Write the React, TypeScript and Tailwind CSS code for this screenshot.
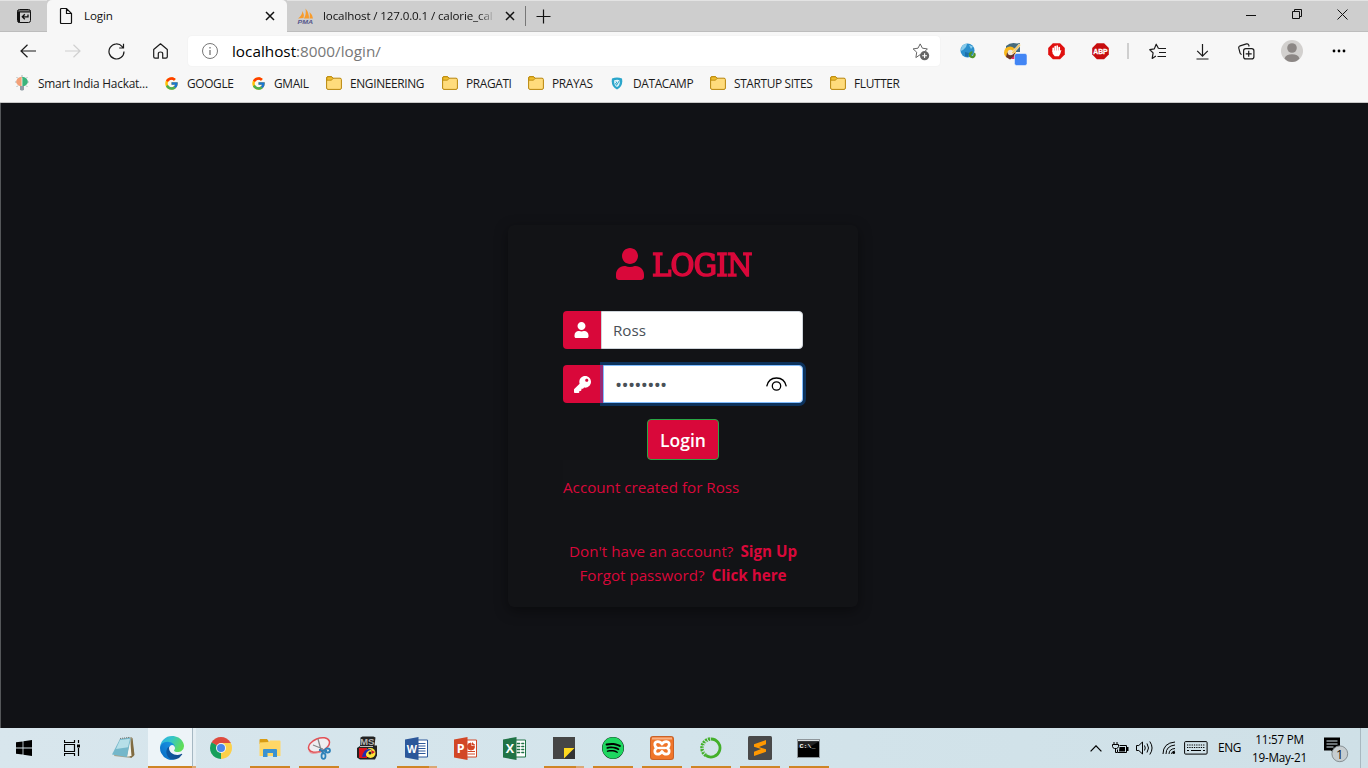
import React from "react";
import type { ReactNode } from "react";
import { FaUser, FaKey, FaSpotify } from "react-icons/fa";
import { FcGoogle } from "react-icons/fc";

const line = { fill: "none", stroke: "currentColor" } as const;

/* ---------- browser icons ---------- */

function TabActionsIcon() {
  return (
    <svg width="16" height="16" viewBox="0 0 16 16">
      <rect x="1.5" y="1.5" width="13" height="13" rx="2" {...line} />
      <path d="M1.5 4h13M1.5 3h13" {...line} />
      <path d="M1.5 4h2.5v10.5h-2z" fill="#111" />
      <path d="M12 6.5v2.300H6.500M8.800 6.200L6.300 8.800l2.500 2.400" {...line} strokeWidth="1.300" />
    </svg>
  );
}

function PageIcon() {
  return (
    <svg width="14" height="18" viewBox="0 0 14 18">
      <path d="M1.500 2.500q0-1 1-1h5l5 5v9q0 1-1 1h-9q-1 0-1-1zM7.500 1.500v5h5" {...line} strokeWidth="1.200" />
    </svg>
  );
}

function CloseIcon() {
  return (
    <svg width="10" height="10" viewBox="0 0 10 10">
      <path d="M1 1l8 8M9 1L1 9" {...line} strokeWidth="1.500" />
    </svg>
  );
}

function PmaIcon() {
  return (
    <svg width="17" height="16" viewBox="0 0 17 16">
      <path d="M1 10.500Q5 8 5.500 3q2 3.500 1 7zM7 10.500Q9.500 6 8.500 .5q3.500 4 3.500 10zM12.500 10.500q.8-3 0-6.500 3 2.500 3.500 6.500z" fill="#f89c2c" />
      <text x="0.500" y="15.500" fontSize="6" fontWeight="bold" fontStyle="italic" fontFamily="Liberation Sans, sans-serif" textLength="15.500" lengthAdjust="spacingAndGlyphs" fill="#55578c">PMA</text>
    </svg>
  );
}

function FolderIcon() {
  return (
    <svg width="16" height="14" viewBox="0 0 16 14">
      <path d="M.6 2q0-1.400 1.400-1.400h3.600l1.400 1.600h7q1.400 0 1.400 1.400V12q0 1.400-1.400 1.400H2Q.6 13.400.6 12z" fill="#ffdc7c" stroke="#b8860b" />
      <path d="M.8 4.200h4.700L7 2.400 5.600.8H2q-1.200 0-1.200 1.200z" fill="#f0be2e" stroke="#b8860b" strokeWidth=".8" />
    </svg>
  );
}

function HackathonIcon() {
  return (
    <svg width="16" height="16" viewBox="0 0 16 16">
      <path d="M8 0v2M2.500 2L4 3.500M13.500 2L12 3.500M1 7h2M13 7h2M2.500 12L4 10.500M13.500 12L12 10.500" stroke="#aab7b5" />
      <path d="M8 2.300A4.500 4.500 0 0 0 5.500 11H8z" fill="#f3a078" />
      <path d="M8 2.300A4.500 4.500 0 0 1 10.500 11H8z" fill="#3bb47c" />
      <path d="M6 11h4v3.500l-1 1H7l-1-1z" fill="#929da5" />
      <path d="M8 3v8" stroke="#fff" strokeWidth=".7" />
    </svg>
  );
}

function DatacampIcon() {
  return (
    <svg width="12" height="13" viewBox="0 0 12 13">
      <path d="M1 1.500Q6-.5 11 1.500q1.500 8-5 11Q-.5 9.500 1 1.500z" fill="#2ba6cb" />
      <path d="M3.200 3.200q3-1 5.600 0Q9.500 8 6 10 2.500 8 3.200 3.200z" fill="#e3f5fa" />
      <path d="M4.500 6l1 2.300L8.500 3.500M5 4.500l1 2" stroke="#2ba6cb" fill="none" />
    </svg>
  );
}

function AddFavoriteIcon() {
  return (
    <svg width="19" height="18" viewBox="0 0 19 18" className="text-[#666]">
      <path d="M9.500 12.300l-1.300-.7-4.300 3 .8-5.400L1.100 5.900 6 5.200 8.200.9l2.200 4.300 5 .7-2.300 2.300" {...line} />
      <circle cx="12.600" cy="12.700" r="4.600" fill="#666" />
      <path d="M10.200 12.700H15M12.600 10.300v4.800" stroke="#fff" strokeWidth="1.100" />
    </svg>
  );
}

function FavoritesIcon() {
  return (
    <svg width="18" height="17" viewBox="0 0 18 17">
      <path d="M9.500 5.500L7.200 1.200 5.300 5.900l-4.500.8 3.300 3.200-.9 5.500 3.700-2.300M9.500 5.500h7.500M10 9.500h7M8.500 13.500H17" {...line} strokeWidth="1.200" strokeLinejoin="round" />
    </svg>
  );
}

function CollectionsIcon() {
  return (
    <svg width="17" height="17" viewBox="0 0 17 17">
      <rect x="5.600" y="5.600" width="10.300" height="10.300" rx="2.200" {...line} strokeWidth="1.200" />
      <path d="M10.700 7.800v6M7.700 10.800h6M3.700 11.500q-1.400-.4-1.700-1.700L.8 5.200q-.4-1.800 1.300-2.400L8.500.9q1.800-.4 2.300 1.200l.3 1.400" {...line} strokeWidth="1.200" />
    </svg>
  );
}

function WorldIcon() {
  return (
    <svg width="17" height="16" viewBox="0 0 17 16">
      <circle cx="7.500" cy="7.500" r="7" fill="#2b8fcc" />
      <path d="M1.500 4Q4 0 7 1L6 4 3 7 .8 8zM9 2l4 1.500-2 2.500z" fill="#88cbea" />
      <path d="M5 9l4 1-1 4-3-1z" fill="#1d6fab" />
      <path d="M12.500 9.500a2.300 2.300 0 1 0 1.500.8" fill="none" stroke="#4f9529" strokeWidth="2.400" />
    </svg>
  );
}

function CaptureIcon() {
  return (
    <svg width="24" height="24" viewBox="0 0 24 24">
      <path d="M3 4Q8-.5 14 1.500l3-.5v9H3z" fill="#466b7c" />
      <circle cx="7" cy="10.500" r="6" fill="#f9b71b" />
      <path d="M3 15l1-4 4-3 4 3-1 4-4 2.500z" fill="#6a3428" />
      <circle cx="7.500" cy="10.500" r="2.800" fill="#efe6db" />
      <path d="M8 11L16 2l2 1-8 9z" fill="#f7cb69" stroke="#fff" strokeWidth=".5" />
      <path d="M8 17l4-4h2v4z" fill="#ee2467" />
      <rect x="11.500" y="11.500" width="12.500" height="12" rx="2" fill="#4285f4" stroke="#fff" strokeWidth=".5" />
    </svg>
  );
}

const OCT = "M4.900.2h7.200l4.700 4.700v6.600l-4.700 4.700H4.900L.2 11.500V4.900z";

function AdblockIcon() {
  return (
    <svg width="17" height="17" viewBox="0 0 17 17">
      <path d={OCT} fill="#e0100f" />
      <path d="M5.200 8.200V5.300M7.200 8V3.700M9.200 8V3.200M11.200 9V4.600" stroke="#fff" strokeWidth="1.700" strokeLinecap="round" />
      <path d="M4.400 7.500h7.500l1.500-.5-1 3.500-1.500 2.800H6.700L4.600 10.500z" fill="#fff" />
    </svg>
  );
}

function AbpIcon() {
  return (
    <svg width="17" height="17" viewBox="0 0 17 17">
      <path d={OCT} fill="#c70d0e" />
      <text x="1.300" y="11" fontSize="7.500" fontWeight="bold" fontFamily="Liberation Sans, sans-serif" textLength="14.300" lengthAdjust="spacingAndGlyphs" fill="#fff" stroke="#fff" strokeWidth=".3">ABP</text>
    </svg>
  );
}

function ProfileIcon() {
  return (
    <svg width="22" height="22" viewBox="0 0 22 22">
      <circle cx="11" cy="11" r="11" fill="#d2d0ce" />
      <circle cx="11" cy="8" r="4.800" fill="#8c8785" />
      <path d="M3.500 18.500Q5 14.300 11 14.300t7.500 4.200Q15.500 22 11 22t-7.500-3.500z" fill="#8c8785" />
    </svg>
  );
}

/* ---------- browser chrome ---------- */

function TabStrip() {
  return (
    <div className="flex h-8 shrink-0 items-stretch border-b border-[#bdbdbd] bg-[#cecece] text-[#111]">
      <div className="flex w-[47px] items-center justify-center rounded-br border-t border-[#e3e3e3]">
        <TabActionsIcon />
      </div>
      <div className="-mb-px flex w-60 items-center rounded-t-[5px] bg-[#f7f7f7] pl-3">
        <PageIcon />
        <span className="ml-[11px] flex-1 text-[11.600px] tracking-[-0.100px]">Login</span>
        <span className="mr-[12px]"><CloseIcon /></span>
      </div>
      <div className="flex w-[238px] items-center border-t border-[#e3e3e3] pl-2.5">
        <PmaIcon />
        <span className="ml-[9px] w-[172px] bg-gradient-to-r from-[#111] from-90% to-[#cecece] bg-clip-text text-[11.600px] tracking-[-0.130px] whitespace-nowrap text-transparent">localhost / 127.0.0.1 / calorie_cal</span>
        <span className="ml-[10px]"><CloseIcon /></span>
      </div>
      <div className="flex flex-1 items-center border-t border-[#e3e3e3]">
        <span className="h-5 w-px bg-[#777]" />
        <svg width="15" height="15" viewBox="0 0 15 15" className="ml-[10px]"><path d="M7.500.5v14M.5 7.500h14" {...line} strokeWidth="1.200" /></svg>
      </div>
      <div className="flex w-[138px] items-center border-t border-[#e3e3e3] pb-[3px]">
        <span className="flex w-[46px] pl-[16px]"><svg width="10" height="10"><path d="M0 5.500h10" {...line} /></svg></span>
        <span className="flex w-[46px] pl-4"><svg width="11" height="11"><path d="M.5 2.500h7v7h-7zM2.500 2.500v-2h7v7h-2" {...line} /></svg></span>
        <span className="flex w-[46px] pl-[15px]"><svg width="11" height="11"><path d="M.5.5l10 10M10.500.5l-10 10" {...line} /></svg></span>
      </div>
    </div>
  );
}

function Tool({ children, className = "w-[46px]" }: { children: ReactNode; className?: string }) {
  return <div className={"flex shrink-0 items-center justify-center " + className}>{children}</div>;
}

function Toolbar() {
  return (
    <div className="flex h-[38px] shrink-0 items-center bg-[#f7f7f7] text-[#1b1b1b]">
      <Tool className="ml-1.5 w-11"><svg width="17" height="14" viewBox="0 0 17 14"><path d="M16 7H1M7.500.7L1 7l6.500 6.300" {...line} strokeWidth="1.200" /></svg></Tool>
      <Tool className="w-11 text-[#d0d0d0]"><svg width="17" height="14" viewBox="0 0 17 14"><path d="M1 7h15M9.500.7L16 7l-6.500 6.300" {...line} strokeWidth="1.200" /></svg></Tool>
      <Tool className="w-11"><svg width="17" height="17" viewBox="0 0 17 17"><path d="M16 8.500A7.500 7.500 0 1 1 14.200 3.600L15.500 5M15.500.8V5h-4.300" {...line} strokeWidth="1.200" /></svg></Tool>
      <Tool className="w-11"><svg width="15" height="16" viewBox="0 0 15 16"><path d="M.7 6.500L7.500.8l6.800 5.700v7.300q0 1.400-1.400 1.400H9.700v-4.500q0-1.700-2.200-1.700t-2.200 1.700v4.500H2.100q-1.400 0-1.400-1.400z" {...line} strokeWidth="1.200" strokeLinejoin="round" /></svg></Tool>
      <div className="ml-1.5 flex h-[30px] w-[752px] items-center rounded bg-white pl-[14px] shadow-[0_0_2px_rgba(0,0,0,0.06)]">
        <svg width="16" height="16" viewBox="0 0 16 16" className="text-[#777]"><circle cx="8" cy="8" r="7.500" {...line} /><path d="M8 7v5M8 4v1.500" {...line} strokeWidth="1.300" /></svg>
        <span className="ml-[14px] flex-1 text-[15.300px] text-[#777]"><span className="text-black">localhost</span>:8000/login/</span>
        <span className="mr-[9px] pt-0.5"><AddFavoriteIcon /></span>
      </div>
      <Tool className="ml-[6px] w-11"><WorldIcon /></Tool>
      <Tool className="w-11 pt-[5px] pl-[5px]"><CaptureIcon /></Tool>
      <Tool className="w-11"><AdblockIcon /></Tool>
      <Tool className="w-11"><AbpIcon /></Tool>
      <Tool className="w-3"><span className="h-4 w-0.5 bg-[#cfcfcf]" /></Tool>
      <Tool className="ml-0.5 w-11"><FavoritesIcon /></Tool>
      <Tool className="w-11"><svg width="13" height="17" viewBox="0 0 13 17"><path d="M6.500 1v12M1.200 7.800l5.300 5.300 5.300-5.300M.5 16h12" {...line} strokeWidth="1.200" /></svg></Tool>
      <Tool className="w-11"><CollectionsIcon /></Tool>
      <Tool className="w-12"><ProfileIcon /></Tool>
      <Tool className="w-[46px]"><svg width="14" height="4"><circle cx="2" cy="2" r="1.400" /><circle cx="7" cy="2" r="1.400" /><circle cx="12" cy="2" r="1.400" /></svg></Tool>
    </div>
  );
}

function Bookmark({ icon, className, children }: { icon: ReactNode; className: string; children: ReactNode }) {
  return (
    <div className={"flex shrink-0 items-center gap-2 whitespace-nowrap " + className}>
      {icon}
      <span className="pt-px">{children}</span>
    </div>
  );
}

function BookmarksBar() {
  return (
    <div className="flex h-[33px] shrink-0 items-center border-b border-[#c8c8c8] bg-[#f7f7f7] pb-[5px] pl-[14px] text-[11.900px] tracking-[-0.350px] text-[#1b1b1b]">
      <Bookmark className="w-[150px]" icon={<HackathonIcon />}><span className="tracking-[-0.220px]">Smart India Hackat...</span></Bookmark>
      <Bookmark className="w-[87px]" icon={<FcGoogle size={15} />}>GOOGLE</Bookmark>
      <Bookmark className="w-[75px]" icon={<FcGoogle size={15} />}>GMAIL</Bookmark>
      <Bookmark className="w-[116px]" icon={<FolderIcon />}>ENGINEERING</Bookmark>
      <Bookmark className="w-[86px]" icon={<FolderIcon />}>PRAGATI</Bookmark>
      <Bookmark className="w-[81px]" icon={<FolderIcon />}>PRAYAS</Bookmark>
      <Bookmark className="w-[101px] pl-0.5" icon={<DatacampIcon />}><span className="pl-0.5">DATACAMP</span></Bookmark>
      <Bookmark className="w-[120px]" icon={<FolderIcon />}>STARTUP SITES</Bookmark>
      <Bookmark className="w-[80px]" icon={<FolderIcon />}>FLUTTER</Bookmark>
    </div>
  );
}

/* ---------- login page ---------- */

function LoginCard() {
  return (
    <div className="flex h-[382px] w-[350px] flex-col items-center rounded-md bg-[#121316] text-[15.200px] leading-6 text-[#d9083a] shadow-[0_4px_14px_rgba(0,0,0,0.4)]">
      <h1 className="mt-5 ml-px flex h-[38px] w-[136px] items-center gap-2">
        <FaUser className="h-8 w-7 shrink-0" />
        <span className="origin-left scale-x-[0.94] pt-0.5 font-['DejaVu_Serif'] text-[31px] leading-none tracking-[-0.800px] [-webkit-text-stroke:1.600px_#d9083a]">LOGIN</span>
      </h1>
      <div className="mt-7 flex h-[38px] w-60">
        <div className="flex w-[38px] items-center justify-center rounded-l bg-[#d9083a] pr-px text-white"><FaUser className="h-4 w-[15px]" /></div>
        <div className="flex flex-1 items-center rounded-r border border-[#ced4da] bg-white pl-[11px] text-[#495057]">Ross</div>
      </div>
      <div className="mt-4 flex h-[38px] w-60">
        <div className="flex w-10 items-center rounded-l bg-[#d9083a] pl-[11px] text-white"><FaKey size={17} /></div>
        <div className="flex flex-1 items-center rounded-r border border-[#80bdff] bg-white pl-3 text-[#495057] shadow-[0_0_0_3px_rgba(0,123,255,0.3)]">
          <span className="-ml-px flex-1 pt-px text-[19px] tracking-[-0.700px]">••••••••</span>
          <svg width="21" height="14" viewBox="0 0 21 14" className="mr-[15px] text-black"><path d="M.7 9.300Q2.500 1 10.500 1t9.800 8.300" {...line} strokeWidth="1.300" /><circle cx="10.500" cy="9" r="4.200" {...line} strokeWidth="1.300" /></svg>
        </div>
      </div>
      <button className="mt-4 h-[41px] w-[72px] rounded border border-[#28a745] bg-[#d9083a] text-[17.500px] font-semibold text-white">Login</button>
      <div className="flex h-10 w-[295px] items-center self-end bg-[#131417] pt-[13px]">Account created for Ross</div>
      <div className="mt-[39px] flex gap-[7px]"><span>Don't have an account?</span><span className="font-bold">Sign Up</span></div>
      <div className="flex gap-[7px]"><span>Forgot password?</span><span className="font-bold">Click here</span></div>
    </div>
  );
}

/* ---------- taskbar icons ---------- */

function NotepadIcon() {
  return (
    <svg width="24" height="24" viewBox="0 0 24 24">
      <path d="M9 3l12-2 2 19-3 2-17-2z" fill="#a7a38e" />
      <path d="M20.500 2.500L21.500 2l2 17-3.500 3-1.500-2z" fill="#806c42" />
      <path d="M19 3l1.500 17-4.500.5z" fill="#f3f4ef" />
      <path d="M9 3l10-1.500.5 2L16 21 1 18.500z" fill="#74b7ca" />
      <path d="M9 4l10-1.200-2 8.500L5 13z" fill="#b6dfe8" />
      <path d="M9 2.500l10-1.200" stroke="#777" strokeDasharray="1 1" />
    </svg>
  );
}

function EdgeIcon() {
  return (
    <svg width="24" height="24" viewBox="0 0 256 256">
      <defs>
        <linearGradient id="edgeA" x1="0" x2="1"><stop stopColor="#0c59a4" /><stop offset="1" stopColor="#114a8b" /></linearGradient>
        <linearGradient id="edgeB" x1="1" y1="0" x2="0" y2="1"><stop stopColor="#1b9de2" /><stop offset=".5" stopColor="#1383d7" /><stop offset="1" stopColor="#0667bd" /></linearGradient>
        <linearGradient id="edgeC" x1="0" y1="0" x2="1" y2=".4"><stop stopColor="#2aacec" /><stop offset=".5" stopColor="#36c6c5" /><stop offset="1" stopColor="#5fdd59" /></linearGradient>
      </defs>
      <path fill="url(#edgeA)" d="M231 190.500c-3.400 1.800-6.900 3.400-10.500 4.700a101.700 101.700 0 0 1-35.900 6.400c-47.300 0-88.500-32.500-88.500-74.300a31.500 31.500 0 0 1 16.400-27.300c-42.800 1.800-53.800 46.400-53.800 72.500 0 73.900 68.100 81.400 82.800 81.400 7.900 0 19.800-2.300 27-4.600l1.300-.4a128.300 128.300 0 0 0 66.600-52.800 4 4 0 0 0-5.400-5.600z" />
      <path fill="url(#edgeB)" d="M105.700 241.400a79.200 79.200 0 0 1-22.700-21.300 80.700 80.700 0 0 1 29.500-120c3.200-1.500 8.500-4.100 15.600-4a32.400 32.400 0 0 1 25.700 13 31.900 31.900 0 0 1 6.300 18.700c0-.2 24.500-79.600-80-79.600-43.900 0-80 41.700-80 78.200a130.200 130.200 0 0 0 12.100 56 128 128 0 0 0 156.400 67 75.500 75.500 0 0 1-62.800-8z" />
      <path fill="url(#edgeC)" d="M152.300 148.900c-.8 1-3.300 2.500-3.300 5.700 0 2.600 1.700 5.100 4.700 7.200 14.400 10 41.500 8.700 41.600 8.700 10.700 0 21.100-2.900 30.300-8.300a61.400 61.400 0 0 0 30.400-52.900c.3-22.400-8-37.300-11.300-43.900C223.500 23.900 177.700 0 128 0A128 128 0 0 0 0 126.200c.5-36.500 36.800-66 80-66 3.500 0 23.500.3 42 10.100 16.300 8.600 24.900 18.900 30.800 29.200 6.200 10.700 7.300 24.100 7.300 29.500s-2.700 13.300-7.800 19.900z" />
    </svg>
  );
}

function ChromeIcon() {
  return (
    <svg width="22" height="22" viewBox="0 0 22 22">
      <path d="M11 11L1.500 5.500a11 11 0 0 1 19 0z" fill="#de4a3d" />
      <path d="M11 11l9.500-5.500A11 11 0 0 1 11 22z" fill="#fcd04a" />
      <path d="M11 11v11A11 11 0 0 1 1.500 5.500z" fill="#169f5b" />
      <path d="M11 6h9.800q1.500 4 0 9L11 22l5-8z" fill="#fcd04a" />
      <path d="M11 6h9.800L20 5H11z" fill="#de4a3d" />
      <path d="M6.500 13.500l-5-8L6 8z" fill="#169f5b" />
      <circle cx="11" cy="11" r="5" fill="#f5f5f5" />
      <circle cx="11" cy="11" r="4" fill="#4a86ea" />
    </svg>
  );
}

function ExplorerIcon() {
  return (
    <svg width="22" height="18" viewBox="0 0 22 18">
      <path d="M.5 1Q.5 0 1.500 0H8l1.500 2v3h-9z" fill="#d99c12" />
      <path d="M.5 3.500L10 3l1-1.500h9.500q1 0 1 1V17h-21z" fill="#ffd766" />
      <path d="M4 18v-7q0-1 1-1h12q1 0 1 1v7h-4v-4H8.500v4z" fill="#3b92d1" />
    </svg>
  );
}

function SnipIcon() {
  return (
    <svg width="24" height="24" viewBox="0 0 24 24">
      <ellipse cx="12" cy="9" rx="11" ry="6.500" transform="rotate(-22 12 9)" fill="#eeeef0" stroke="#e25055" strokeWidth="1.500" />
      <path d="M2 15q1 4 12 1" stroke="#e8888c" fill="none" />
      <path d="M11 3l3 11M6 9l10 4" stroke="#888" strokeWidth="1.300" />
      <path d="M13 13l4 5M12 14l8 1" stroke="#327cae" strokeWidth="2" />
      <ellipse cx="20.500" cy="14.500" rx="2.500" ry="2" fill="none" stroke="#2c82ba" strokeWidth="1.800" />
      <ellipse cx="16.500" cy="20" rx="2" ry="2.800" fill="none" stroke="#2c82ba" strokeWidth="1.800" />
    </svg>
  );
}

function MsIcon() {
  return (
    <svg width="21" height="24" viewBox="0 0 21 24">
      <path d="M3.500 1.500l2-1h11l2 1-1 8H20v10l-2 4H3l-3-2V12l3-2z" fill="#222" />
      <text x="3" y="8.800" fontSize="9.500" fontWeight="bold" fontFamily="Liberation Sans, sans-serif" textLength="14.500" lengthAdjust="spacingAndGlyphs" fill="#b4b4b4">MS</text>
      <path d="M2 12h8v10H2z" fill="#dc111b" />
      <circle cx="13.500" cy="17" r="5" fill="#ffe538" />
      <path d="M5 21q2-10 10-7.500-7 1.500-6 7z" fill="#202baf" />
      <path d="M14 14l4 2-3 2z" fill="#d6172b" />
      <circle cx="13" cy="17" r="1.500" fill="#222" />
      <path d="M3 10.500h13" stroke="#bbb" />
    </svg>
  );
}

function OfficeIcon({ letter, color }: { letter: string; color: string }) {
  return (
    <svg width="23" height="23" viewBox="0 0 23 23">
      <path d="M12 3h10.500v17H12z" fill="#fff" stroke={color} />
      {letter === "W" && <path d="M13 6.500h7.500M13 9h7.500M13 11.500h7.500M13 14h7.500M13 16.500h7.500" stroke={color} />}
      {letter === "P" && <path d="M17 6a3.500 3.500 0 1 0 3.500 3.500H17zM18.500 5.500V8H21M13.500 14.500H21M13.500 17H21" fill={color} stroke={color} />}
      {letter === "X" && <path d="M14 6h3v1h-3zm4.500 0H21v1h-2.500zM14 9h3v1h-3zm4.500 0H21v1h-2.500zM14 12h3v1h-3zm4.500 0H21v1h-2.500zM14 15h3v1h-3zm4.500 0H21v1h-2.500z" fill={color} stroke={color} strokeWidth=".5" />}
      <path d="M0 2.500L13.500 0v23L0 20.500z" fill={color} />
      <text x="6.800" y="16" textAnchor="middle" fontSize={letter === "W" ? "10.500" : "12.500"} fontWeight="bold" fontFamily="Open Sans, sans-serif" fill="#fff">{letter}</text>
    </svg>
  );
}

function StickyIcon() {
  return (
    <svg width="22" height="22" viewBox="0 0 22 22">
      <path d="M0 0h22v22H0z" fill="#454545" />
      <path d="M11 11h10.500L11 21.500z" fill="#ffd91f" />
      <path d="M22 11v11H11z" fill="#333" />
    </svg>
  );
}

function XamppIcon() {
  return (
    <svg width="24" height="24" viewBox="0 0 24 24">
      <rect width="24" height="24" rx="3" fill="#c96127" />
      <rect x="1" y="1" width="22" height="22" rx="2.500" fill="#f0762a" />
      <path d="M2 1.500h20v2H2z" fill="#f7b184" />
      <path d="M12 8.200Q10.500 5.500 7.500 5.700 4.500 6 4.800 9q.2 2 2.200 3-2.200 1-2.200 3.200 0 2.800 2.900 3 2.800 0 4.300-2.700 1.500 2.700 4.300 2.700 2.900-.2 2.900-3 0-2.200-2.200-3.200 2-1 2.200-3 .3-3-2.700-3.300-3-.2-4.500 2.500z" fill="none" stroke="#fff" strokeWidth="2.700" strokeLinejoin="round" />
      <path d="M9 12h6" stroke="#fff" strokeWidth="2.500" strokeLinecap="round" />
    </svg>
  );
}

function AnacondaIcon() {
  return (
    <svg width="22" height="22" viewBox="0 0 22 22">
      <path d="M11 2a9 9 0 1 1-5 16.500" fill="none" stroke="#43b02a" strokeWidth="2.800" />
      <path d="M6 18.500A9 9 0 0 1 11 2" fill="none" stroke="#43b02a" strokeWidth="3.500" strokeDasharray="2 .8" />
      <path d="M5 16.500A8 8 0 0 1 9 3.500" fill="none" stroke="#d5e4eb" strokeWidth=".9" strokeDasharray="1.500 1" />
    </svg>
  );
}

function SublimeIcon() {
  return (
    <svg width="24" height="24" viewBox="0 0 24 24">
      <rect width="24" height="24" rx="1.500" fill="#494949" />
      <path d="M6 8.300L18 4v4.300L11 11l7 2.300v2.500L6 20v-4.300L13 13 6 10.800z" fill="#ff9800" />
    </svg>
  );
}

function CmdIcon() {
  return (
    <svg width="23" height="19" viewBox="0 0 23 19">
      <path d="M0 0h23v19H0z" fill="#8e969b" />
      <path d="M1 2.500h21V18H1z" fill="#000" />
      <path d="M1 1h21v1H1z" fill="#dce0e2" />
      <path d="M1 2.500h21L11 9H1z" fill="#222" />
      <text x="2.500" y="8.800" fontSize="6" fontWeight="bold" fontFamily="Liberation Mono, monospace" fill="#fff" textLength="16" lengthAdjust="spacingAndGlyphs">C:\_</text>
    </svg>
  );
}

type TaskApp = { icon: ReactNode; run?: "one" | "many" | "active" };

const APPS: TaskApp[] = [
  { icon: <NotepadIcon /> },
  { icon: <EdgeIcon />, run: "active" },
  { icon: <ChromeIcon /> },
  { icon: <ExplorerIcon />, run: "one" },
  { icon: <SnipIcon />, run: "one" },
  { icon: <MsIcon /> },
  { icon: <OfficeIcon letter="W" color="#2b579a" />, run: "many" },
  { icon: <OfficeIcon letter="P" color="#d24726" /> },
  { icon: <OfficeIcon letter="X" color="#217346" /> },
  { icon: <StickyIcon />, run: "many" },
  { icon: <span className="flex rounded-full bg-black"><FaSpotify size={22} color="#1ed760" /></span>, run: "one" },
  { icon: <XamppIcon />, run: "one" },
  { icon: <AnacondaIcon />, run: "one" },
  { icon: <SublimeIcon />, run: "one" },
  { icon: <CmdIcon />, run: "one" },
];

function TaskButton({ icon, run }: TaskApp) {
  if (run === "active") {
    return (
      <div className="flex h-10 w-[49px] flex-col pl-px">
        <div className="flex h-[38px]">
          <div className="flex w-[45px] items-center justify-center border-r border-[#a6b8c3] bg-[#edf4f8] pt-0.5 pl-1">{icon}</div>
          <div className="w-[3px] bg-[#e4eef3]" />
        </div>
        <div className="flex h-0.5"><span className="w-[44px] bg-[#cf8526]" /><span className="w-1 bg-[#dba873]" /></div>
      </div>
    );
  }
  return (
    <div className="flex h-10 w-[49px] flex-col items-center">
      <div className="flex h-[38px] items-center pt-0.5">{icon}</div>
      {run && (
        <div className="flex h-0.5 w-10">
          <span className="flex-1 bg-[#cf8526]" />
          {run === "many" && <span className="w-2 bg-[#dba873]" />}
        </div>
      )}
    </div>
  );
}

function Taskbar() {
  return (
    <div className="flex h-10 shrink-0 items-center bg-gradient-to-r from-[#d8e6ed] via-[#d3e4eb] to-[#cfe0e7] text-black">
      <div className="flex w-12 justify-center">
        <svg width="16" height="16" viewBox="0 0 16 16"><path d="M0 2.300L6.600 1.400v6.200H0zM7.400 1.300L16 0v7.600H7.400zM0 8.400h6.600v6.200L0 13.700zM7.400 8.400H16V16l-8.600-1.200z" /></svg>
      </div>
      <div className="flex w-12 justify-center">
        <svg width="17" height="16" viewBox="0 0 17 16"><path d="M.5 0v2.500h10V0M.5 16v-2.500h10V16M.5 4.500h10v7H.5zM14.500 0v3M14.500 8v8" {...line} strokeWidth="1.200" /><path d="M13 4.500h3v3h-3z" /></svg>
      </div>
      <div className="flex flex-1 pl-0.5">
        {APPS.map((app, i) => <TaskButton key={i} {...app} />)}
      </div>
      <div className="flex w-[282px] shrink-0 items-center">
        <svg width="12" height="7" className="ml-1" viewBox="0 0 12 7"><path d="M.6 6.300L6 .8l5.400 5.500" {...line} strokeWidth="1.200" /></svg>
        <svg width="17" height="12" className="ml-2.5" viewBox="0 0 17 12"><path d="M2 0v2M5 0v2M.5 2.500h6v2q-.5 2-2 2h-2q-2-.5-2-2zM3.500 6.500v4H5M7.500 3.500h7v7H5.500v-3" {...line} /><path d="M7.500 5H13v4.500H7zM15 5h1.500v4H15z" /></svg>
        <svg width="18" height="14" className="ml-[7px]" viewBox="0 0 18 14"><path d="M.5 4.500h2.300L6.500 1v12L2.800 9.500H.5zM8.500 4.500q1.500 2.500 0 5M11 2.500q3 4.500 0 9M13.800.5q4.500 6.500 0 13" {...line} /></svg>
        <svg width="14" height="14" className="ml-2" viewBox="0 0 14 14"><path d="M1 13Q1 2 13 1M4 13Q4 5 13 4M7 13q0-5 6-5.500M9.500 13q0-2.500 3.500-3" {...line} /><circle cx="11.800" cy="11.800" r="1.300" /></svg>
        <svg width="24" height="14" className="ml-2" viewBox="0 0 24 14"><rect x=".6" y=".6" width="22.500" height="12.500" rx="1" {...line} /><path d="M3 4h18M3 6.500h18" {...line} strokeDasharray="1.300 1" /><path d="M3 9.500h2M7 9.500h10M19 9.500h2" {...line} /></svg>
        <span className="ml-[10px] w-6 text-[11.900px] tracking-[-0.400px]">ENG</span>
        <div className="ml-[7px] w-[61px] text-center text-[11.700px] leading-[18px] tracking-[-0.250px] whitespace-nowrap">
          <div>11:57 PM</div>
          <div>19-May-21</div>
        </div>
        <svg width="26" height="26" viewBox="0 0 26 26" className="mt-1 ml-[13px]">
          <path d="M1 .5h16v13h-5v4l-4-4H1z" />
          <path d="M3.500 4h11M3.500 7h11M3.500 10h7" stroke="#d3e2e9" />
          <circle cx="16.800" cy="16.800" r="7.900" fill="#c6cdd0" stroke="#858e92" />
          <text x="16.800" y="21.600" textAnchor="middle" fontSize="13" fontFamily="Open Sans, sans-serif" fill="#111">1</text>
        </svg>
      </div>
      <div className="-ml-2 mr-[7px] h-10 w-px bg-[#a8b8c0]" />
    </div>
  );
}

export default function App() {
  return (
    <div className="flex h-[768px] w-[1368px] flex-col overflow-hidden bg-[#101114] font-['Open_Sans',sans-serif]">
      <TabStrip />
      <Toolbar />
      <BookmarksBar />
      <main className="flex flex-1 justify-center border-l border-[#55575a] bg-[#111216] pt-[122px] pr-[3px]">
        <LoginCard />
      </main>
      <Taskbar />
    </div>
  );
}
